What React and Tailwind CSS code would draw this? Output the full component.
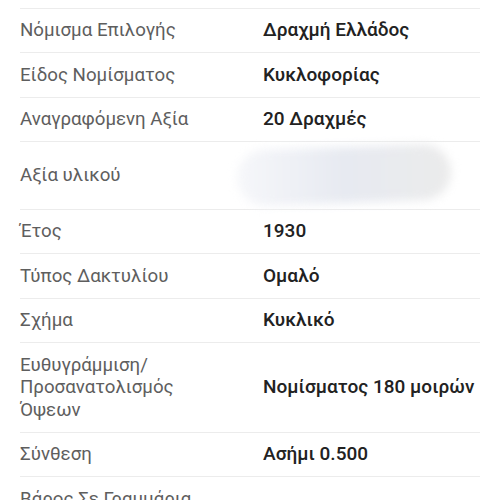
import React from "react";

const rows = [
    { label: "Νόμισμα Επιλογής", value: "Δραχμή Ελλάδος" },
    { label: "Είδος Νομίσματος", value: "Κυκλοφορίας" },
    { label: "Αναγραφόμενη Αξία", value: "20 Δραχμές" },
    { label: "Αξία υλικού", blurred: true },
    { label: "Έτος", value: "1930" },
    { label: "Τύπος Δακτυλίου", value: "Ομαλό" },
    { label: "Σχήμα", value: "Κυκλικό" },
    { label: ["Ευθυγράμμιση/", "Προσανατολισμός", "Όψεων"], value: "Νομίσματος 180 μοιρών" },
    { label: "Σύνθεση", value: "Ασήμι 0.500" },
    { label: "Βάρος Σε Γραμμάρια", value: "" },
];

function BlurredValue() {
    return (
        <div className="h-[45.5px] -ml-[26px] w-[216px] flex items-center">
            <div className="h-[56px] w-[214px] rounded-[28px] -rotate-2 blur-[5px] bg-gradient-to-r from-[#f6f7fa] via-[#e7eaf1] to-[#ebebeb]" />
        </div>
    );
}

export default function App() {
    return (
        <div className="w-[500px] h-[500px] overflow-hidden bg-white font-['Roboto',sans-serif]">
            <div className="h-[7.5px]" />
            <div className="mx-[20px]">
                {rows.map((row, i) => (
                    <div
                        key={i}
                        className="grid grid-cols-[243px_1fr] items-center border-t border-[#ececec] py-[10.5px] text-[18.7px] leading-[22.5px]"
                    >
                        <div className="text-[#5e5e5e]">
                            {Array.isArray(row.label)
                                ? row.label.map((l) => <div key={l}>{l}</div>)
                                : row.label}
                        </div>
                        <div className="text-[#222] font-['Roboto_Medium','Roboto',sans-serif] font-medium whitespace-nowrap text-[19px]">
                            {row.blurred ? <BlurredValue /> : row.value}
                        </div>
                    </div>
                ))}
            </div>
        </div>
    );
}
